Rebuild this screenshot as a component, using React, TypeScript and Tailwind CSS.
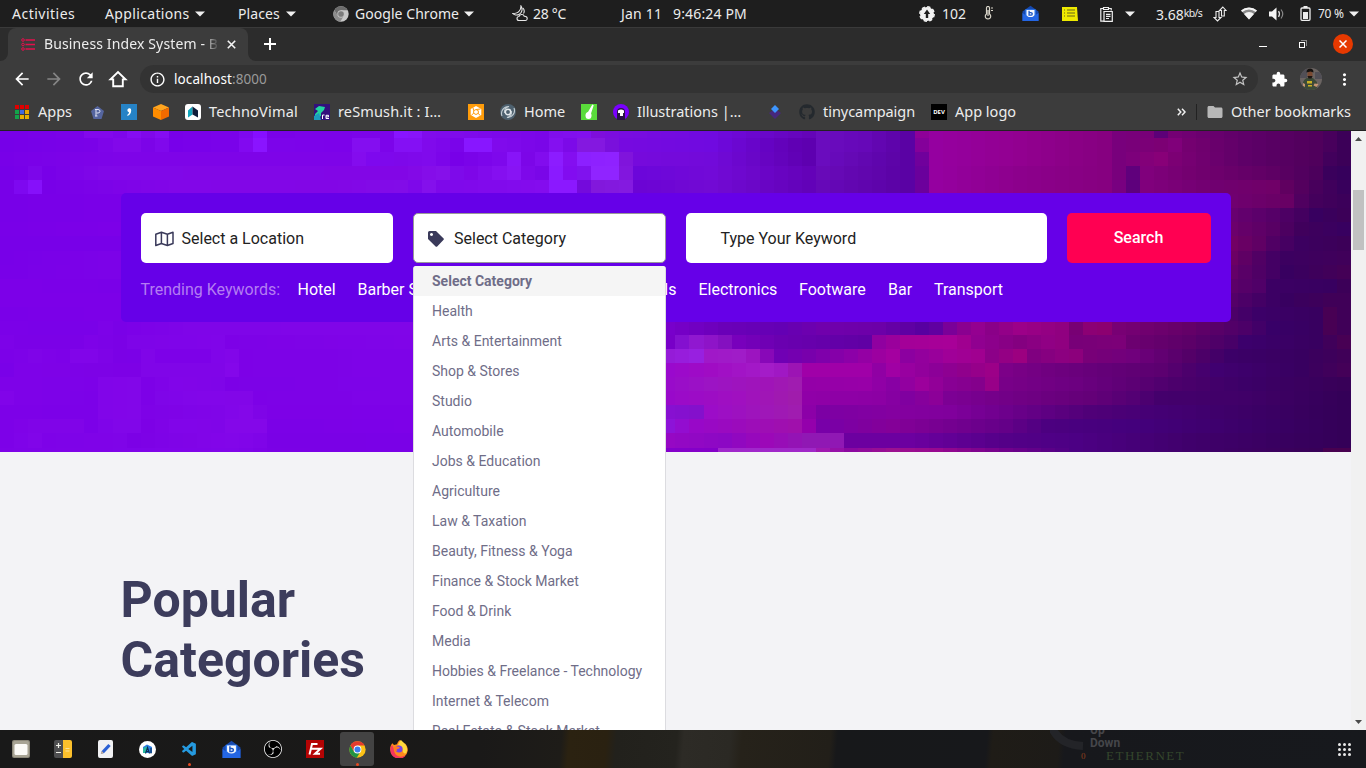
import React from "react";
import {
  MdArrowBack,
  MdArrowForward,
  MdRefresh,
  MdInfoOutline,
  MdStarBorder,
  MdExtension,
  MdMoreVert,
  MdFolder,
} from "react-icons/md";
import { FaGithub } from "react-icons/fa";
import { SiObsstudio } from "react-icons/si";
import { VscVscode } from "react-icons/vsc";

const MOSAIC = [
  "0:7800e8 5:7a02e8 6:8208ec 7:8208ec 8:7e06ea 9:850cf2 10:8008ea 11:850cf2 12:7800e8 16:7a02ea 17:7e08ee 18:860eff 19:7a02e8 27:7c04ea 28:8814ff 29:8814fa 30:800cec 38:7a06e8 39:800eec 41:8210ee 42:7e0edc 44:780ce0 50:700ae0 57:6404b8 58:6a0cbe 61:6608b8 64:5a02a4 65:8e0098 66:9500a0 72:920090 78:860080 79:78007c 81:780078 82:5c0078 83:740074 88:5e0068 93:50005c 94:48005c 95:3c0058",
  "0:7600e8 6:7a02e8 8:8208ea 9:8208ea 10:7c04e8 11:8008ec 12:7800ea 16:7a02ea 17:8209f0 18:8a14ff 19:7c04ea 24:7c02ea 25:840ef0 26:840ef0 27:7c04ea 28:8410f4 29:8410f4 30:800aec 32:7a04ea 33:8816ff 34:8816ff 35:800aec 38:7a06e8 39:8410f0 40:7c0ae8 41:8418e0 42:8418e0 43:7a10dc 44:760ae0 50:700ae0 56:6000b4 57:5e00b0 58:6a0cbe 61:6608b8 64:5a02a4 65:84009a 66:9500a0 72:920090 78:860080 79:78007c 82:7c0074 83:80007a 84:740070 88:5e0068 93:50005c 94:48005c 95:3c0058",
  "0:7800e8 8:7e04e8 24:7e04e8 25:840cee 26:7e08ee 28:7e08ea 30:800aec 32:7800e8 35:7e08ec 36:8814f8 37:7c06e8 38:820cee 39:8c1cff 40:840ef0 41:8c20ff 43:8f22ff 44:8014dc 45:760adc 50:720ada 57:5e00b0 58:6a0cbe 64:5a02a4 65:70009c 66:9500a0 72:920090 78:860080 79:78007c 82:880078 83:7c0074 88:5e0068 93:50005c 94:42005c 95:3c0058",
  "0:7600e8 1:7800e8 2:7c06ea 3:7800e8 7:8008e8 28:8206e6 31:8610ea 32:7e0aea 33:7e06e8 36:8814f4 37:7e08ea 38:7a06e8 39:8a1aff 40:820cf0 41:8012ee 42:9024ff 43:9024ff 44:8216de 45:6c06da 50:720ad8 57:6402b8 58:680ab8 64:5a02a4 65:6a009c 66:9500a0 72:8c008c 78:860080 79:78007c 80:60007c 81:80007c 84:740070 90:5e0064 93:4c005c 94:3a005c 95:36005c",
  "0:7800e8 1:7e08f0 2:8610fa 3:7800e8 12:8206e8 23:8206e6 28:820ce8 29:7e08ea 30:8410ec 31:7e08ea 38:840cee 39:8b18ff 40:8b18ff 41:740adc 42:8218dc 44:841ae0 45:6c04d4 50:720ad4 57:6202b8 58:6608b8 64:5a02a4 65:6c009c 66:9500a0 72:8c008c 78:860080 79:780080 80:5e007c 81:80007c 86:700070 90:700068 91:600060 93:48005c 94:40005c 95:38005c",
  "0:7800e8 8:7a00e8 87:700070 91:680064 92:500060 93:44005c 95:3c005a",
  "0:7800e8 8:7a00e8 87:680070 90:560068 92:440060 93:380060 95:3c0058",
  "0:7900e8 8:7c00e8 87:6c006c 90:580064 92:40005c 95:380060",
  "0:7800e8 8:7800e8 87:720064 89:600064 90:500064 92:3c0060 95:3c0058",
  "0:7800e8 8:7c02e8 87:6c0064 90:440064 91:3c0060 95:40005a",
  "0:7900e8 8:7c02e8 87:640068 90:440064 91:380060 95:440056",
  "0:7c00e8 8:7a00e8 87:5c0068 89:500068 90:3c0064 94:380060 95:3c0058",
  "0:7c00e8 8:7c00e8 87:540068 90:3c0064 91:380060 94:400058 95:400058",
  "0:7a00e8 8:7c00e8 87:4c0068 89:3c0068 93:380060 94:480054 95:400058",
  "0:7800e8 6:7600e8 7:7c02e8 8:7600e6 9:7a00e8 13:8006e8 30:8206e8 46:7c00d0 51:6a00b8 55:6400b4 58:7000ac 62:6c00a8 65:5800a0 66:6000a0 67:7a0098 68:8a0090 69:940090 70:8a0088 72:9c0088 75:900080 76:780074 77:8c0074 78:8c0070 79:780074 84:640068 88:4c0068 90:380068 93:380060 94:480054 95:400058",
  "0:7c02e8 1:7800e6 5:7800e6 6:7e02e8 8:7800e4 9:7e04e8 15:8206ea 16:7c00e6 30:8206e8 46:7800c8 47:7800c8 48:8410d0 49:9018d0 50:8e14c8 51:8410c0 52:7800bc 55:6a00b0 61:6000a4 62:9000a0 64:a40098 67:a80098 68:a00090 69:900090 72:840080 74:900084 75:900080 76:780078 79:7c0078 80:6c0070 84:5c0068 87:480068 88:3c006c 93:380060 95:480054",
  "0:7a00e8 2:8004e8 4:7c00e8 5:8406ea 6:8406ea 8:7800e4 9:7800e6 10:8206e8 11:7c00e8 14:7c00e8 15:8206ea 16:8608ea 17:7c00e6 30:7e04e8 46:9418d4 49:9820e0 50:a018c8 52:a01cc8 53:9c14c0 54:8808b8 55:7000b4 57:7800ac 60:8c00a8 62:9c00a0 63:a400a0 64:8c00a0 67:a00098 69:a00090 70:8c0088 72:9c0080 73:800080 75:8c0080 76:8c007c 77:780078 80:70007c 84:540068 87:3c0068 92:380060 95:400058",
  "0:7600e8 1:7e02e8 8:7c00e4 9:7c00e4 10:8206e8 15:8206e8 16:880aec 17:7c00e6 30:7e04e8 46:9808d0 50:a00cc4 54:a41cc8 55:a018c4 56:9c14b4 57:a000a8 61:a000a8 62:9000a4 63:a000a4 64:9800a0 66:8c0098 68:90008c 70:9c0088 71:7c0088 74:700080 78:640078 82:5c0070 84:4c006c 86:400070 92:380060 95:440058",
  "0:7e02e8 6:7c00e8 7:8406ea 9:8608ea 10:7c00e6 12:8406ea 13:8406e8 15:8006e8 16:7a00e6 30:7e04e8 46:9808cc 50:9c14c4 54:a014b8 56:a01cb0 57:9400a8 61:9800a8 63:8800a4 65:9c009c 67:880094 69:84008c 70:980088 71:780088 76:6c0080 80:5c0074 83:4c006c 88:3c0068 95:380058",
  "0:8404ea 1:7e02e8 6:7a00e8 7:8406ea 9:8608ea 10:7c00e6 11:8006e8 13:8408ea 17:8608e8 18:7c00e6 30:7e04e8 46:9808cc 52:a010c0 56:a01cac 57:9000a8 62:8c00a4 64:8000a0 66:8c0098 67:7c0094 72:700084 77:640078 80:540074 82:44006c 88:400068 95:340058",
  "0:7c00e8 6:7a00e8 7:8406ea 9:8608ea 10:7e02e6 15:8206e8 17:880aea 18:8004e6 19:7c00e6 30:7c00e8 46:8810d4 49:8410cc 50:9c0cc8 56:a01cb0 57:8c00a8 58:7c00a4 63:8400a0 67:80009c 72:680088 77:500078 82:440074 95:340058",
  "0:7c00e8 2:8204e8 5:8204e8 6:7a00e8 8:8408ea 9:8408ea 10:7c00e4 12:8406ea 15:8206e8 16:880aea 18:880aea 19:7800e6 30:7c00e8 46:8818e0 49:9808c8 56:a010ac 57:9400ac 58:7800a8 63:840098 71:640088 74:4c0080 80:44007c 95:340058",
  "0:7c00e8 2:8406ea 3:7e02e8 8:8004e8 9:7a00e4 12:8004e6 16:8608ea 18:8004e8 19:7600e4 30:7600e6 46:9808c4 51:8c08c4 54:9c08b8 57:9018b4 59:9018b4 60:6c00a0 64:6c00a0 71:540088 76:4c0084 84:40006c 95:340058",
  "0:7e02e8 16:8206ea 19:7800e4 30:7600e6 46:8400cc 50:8400c8 51:a028cc 57:a028c8 58:a018b0 60:8c08a0 63:9c1090 66:980890 71:70008c 76:4c0084 84:40006c 93:380058 94:480050 95:480050",
];

const CELL = 14.07;
const VIOLET = [126, 3, 232];

function channels(hex: string): number[] {
  return [0, 2, 4].map((i) => parseInt(hex.slice(i, i + 2), 16));
}

function expandRow(row: string, r: number): string[] {
  const stops = row.split(" ").map((s) => {
    const [col, hex] = s.split(":");
    return { col: Number(col), rgb: channels(hex) };
  });
  const out: string[] = [];
  for (let c = 0; c < 96; c++) {
    let i = 0;
    while (i < stops.length - 2 && stops[i + 1].col <= c) i++;
    const a = stops[i];
    const b = stops[i + 1];
    const t = Math.min(1, (c - a.col) / (b.col - a.col));
    const soften = r >= 14 && c < 30 ? 0.45 : 0;
    const rgb = a.rgb.map((v, k) => {
      const value = v + (b.rgb[k] - v) * t;
      return Math.round(value + (VIOLET[k] - value) * soften);
    });
    out.push(`rgb(${rgb.join(",")})`);
  }
  return out;
}

const Mosaic = () => (
  <svg className="absolute inset-0" width="1351" height="321" shapeRendering="crispEdges">
    {MOSAIC.map((row, r) =>
      expandRow(row, r).map((fill, c) => (
        <rect
          key={`${r}-${c}`}
          x={Math.round(c * CELL)}
          y={Math.round(7 + (r - 1) * CELL)}
          width={15}
          height={15}
          fill={fill}
        />
      ))
    )}
  </svg>
);

const Slot = ({ className, children }: { className: string; children?: React.ReactNode }) => (
  <div className={`flex shrink-0 items-center whitespace-nowrap ${className}`}>{children}</div>
);

const Caret = () => (
  <svg width="10" height="6" viewBox="0 0 10 6" className="shrink-0">
    <path d="M0 .5h10L5 5.500z" fill="#f0f0f0" />
  </svg>
);

const MailIcon = ({ size }: { size: number }) => (
  <svg width={size} height={size} viewBox="0 0 18 18">
    <path d="M.5 7 9 .8 17.500 7v10H.5z" fill="#1648ad" />
    <path d="M3.500 4.500h11V12h-11z" fill="#2e78ee" />
    <path d="m.5 8.500 5 3.500h7l5-3.500V17H.5z" fill="#2466e4" />
    <path d="M4.800 5.200h8.400v4.600q0 3-4.200 3t-4.200-3z" fill="#f6f9ff" />
    <path d="M7.500 6v4.800h1.800c2 0 2-2.800 0-2.800H7.500" fill="none" stroke="#1b55c4" strokeWidth="1.400" />
  </svg>
);

const ChromeIcon = ({ size, gray }: { size: number; gray?: boolean }) => (
  <svg width={size} height={size} viewBox="0 0 48 48">
    <circle cx="24" cy="24" r="23" fill={gray ? "#c8c8c8" : "#fbc116"} />
    <path d="M4 12.500A23 23 0 0 1 44 12.500H24L14 30z" fill={gray ? "#6c6c6c" : "#e33b2e"} />
    <path d="M4 12.500A23 23 0 0 0 22 47l10-17H14z" fill={gray ? "#8c8c8c" : "#229342"} />
    <circle cx="24" cy="24" r="11" fill={gray ? "#c4c4c4" : "#fff"} />
    <circle cx="24" cy="24" r="8.500" fill={gray ? "#7c7c7c" : "#3b7ded"} />
  </svg>
);

const TopBar = () => (
  <div className="flex h-[27px] shrink-0 items-center bg-[#1e1e1e] pl-3 text-[14px] text-[#ececec]">
    <Slot className="w-[93px] tracking-[0.5px]">Activities</Slot>
    <Slot className="w-[90px] tracking-[0.35px]">Applications</Slot>
    <Slot className="w-[43px]"><Caret /></Slot>
    <Slot className="w-[48px] tracking-[0.1px]">Places</Slot>
    <Slot className="w-[47px]"><Caret /></Slot>
    <Slot className="w-[22px]"><ChromeIcon size={16} gray /></Slot>
    <Slot className="w-[109px] tracking-[0.05px]">Google Chrome</Slot>
    <Slot className="w-[48px]"><Caret /></Slot>
    <Slot className="w-[21px]">
      <svg width="17" height="17" viewBox="0 0 17 17" fill="none" stroke="#e8e8e8" strokeWidth="1.100">
        <path d="M9 1c2 3 1 7-2 8.500C5 10.500 2 10 .8 8.500c3 0 5-.5 6.500-2.500C8.500 4.500 9 3 9 1zM11 3c1.500 2 1.500 4 .5 5.500" />
        <path d="M7 15.500a2 2 0 0 1 0-4c.5-2.300 4.500-2.800 5.300-.2 3.500-.6 3.900 4.200.9 4.200z" />
      </svg>
    </Slot>
    <Slot className="w-[88px] tracking-[-0.3px]">28 °C</Slot>
    <Slot className="w-[52px] pb-px tracking-[0.2px]">Jan 11</Slot>
    <Slot className="w-[246px] pb-px tracking-[0.15px]">9:46:24 PM</Slot>
    <Slot className="w-[23px]">
      <svg width="16" height="16" viewBox="0 0 16 16">
        <circle cx="8" cy="8" r="7" fill="#f2f2f2" />
        <circle cx="8" cy="8" r="7.200" fill="none" stroke="#f2f2f2" strokeWidth="1.500" strokeDasharray="3.350 2.300" />
        <path d="M8 3.500 11.200 8H9.200v4H6.800V8H4.800z" fill="#1e1e1e" />
      </svg>
    </Slot>
    <Slot className="w-[42px]">102</Slot>
    <Slot className="w-[38px] pb-px">
      <svg width="10" height="14" viewBox="0 0 10 14" fill="none" stroke="#d8d4c8" strokeWidth="1.200">
        <path d="M2.500 8V2a1.500 1.500 0 0 1 3 0v6a2.700 2.700 0 1 1-3 0zM4 4v6M7 2h2M7 4.500h2" />
      </svg>
    </Slot>
    <Slot className="w-[40px]"><MailIcon size={17} /></Slot>
    <Slot className="w-[38px]">
      <svg width="16" height="14" viewBox="0 0 16 14">
        <path d="M0 0h15l1 14H0z" fill="#eeea00" />
        <path d="M2 3h1M2 6h1M2 9h1M5 3h8M5 6h8M5 9h8" stroke="#67661a" strokeWidth="1.200" />
      </svg>
    </Slot>
    <Slot className="w-[25px]">
      <svg width="13" height="16" viewBox="0 0 13 16" fill="none" stroke="#eee" strokeWidth="1.200">
        <path d="M3 2.500H.8v12.700h3M9 2.500h2.200v2M3.500 1.500h5v2h-5zM4 5.500h8.300v9.800H4zM6 8.300h4.500M6 10.400h4.500M6 12.500h3" />
      </svg>
    </Slot>
    <Slot className="w-[31px]"><Caret /></Slot>
    <Slot className="w-[57px] items-baseline pt-px">
      <span>3.68</span>
      <span className="text-[10.500px] tracking-[-0.7px]">kb/s</span>
    </Slot>
    <Slot className="w-[28px]">
      <svg width="14" height="16" viewBox="0 0 14 16" fill="none" stroke="#eee" strokeWidth="1.100">
        <path d="M3 5.500h3v6h2L4.500 15 1 11.500h2zM8.500 10V4.500h-2L9.800 1 13 4.500h-1.700V10z" />
      </svg>
    </Slot>
    <Slot className="w-[28px]">
      <svg width="16" height="13" viewBox="0 0 16 13">
        <path d="M0 3.500a12 12 0 0 1 16 0L8 12.500z" fill="#8a8a8a" />
        <path d="M0 3.500a12 12 0 0 1 16 0l-1.300 1.500a10 10 0 0 0-13.400 0zM3 7a7.500 7.500 0 0 1 10 0l-5 5.500z" fill="#f4f4f4" />
      </svg>
    </Slot>
    <Slot className="w-[31px]">
      <svg width="16" height="14" viewBox="0 0 16 14">
        <path d="M0 4.500h3L7.500.5v13L3 9.500H0z" fill="#f4f4f4" />
        <path d="M9.500 4.200q2 2.800 0 5.600" stroke="#ddd" strokeWidth="1.300" fill="none" />
        <path d="M12 2.500q3.500 4.500 0 9" stroke="#888" strokeWidth="1.200" fill="none" />
      </svg>
    </Slot>
    <Slot className="w-[18px] pb-px">
      <svg width="11" height="15" viewBox="0 0 11 15">
        <path d="M3.500 0h4v2h-4z" fill="#eee" />
        <rect x="1" y="2" width="9" height="12.300" rx="1" fill="none" stroke="#eee" strokeWidth="1.300" />
        <path d="M3 6h5v7H3z" fill="#eee" />
      </svg>
    </Slot>
    <Slot className="w-[31px] text-[12px] tracking-[-0.3px]">70 %</Slot>
    <Slot className="w-[17px]"><Caret /></Slot>
  </div>
);

const TabStrip = () => (
  <div className="flex h-[34px] shrink-0 border-t border-[#3a3a3a] bg-[#2c2c2c]">
    <div className="flex w-2 items-end bg-[#3c3c3c]">
      <div className="h-[33px] w-2 rounded-br-lg bg-[#2c2c2c]" />
    </div>
    <div className="flex w-[240px] items-center rounded-t-lg bg-[#3c3c3c] pl-[13px]">
      <Slot className="w-[23px]">
        <svg width="14" height="13" viewBox="0 0 14 13" stroke="#e2104c" fill="none">
          <circle cx="2" cy="2" r="1.300" /><circle cx="2" cy="6.500" r="1.300" /><circle cx="2" cy="11" r="1.300" />
          <path d="M4.500 2H14M4.500 6.500H14M4.500 11H14" strokeWidth="1.300" />
        </svg>
      </Slot>
      <div className="mr-2 w-[175px] overflow-hidden whitespace-nowrap pb-[2px] text-[14px] tracking-[0.13px] text-[#ededed] [mask-image:linear-gradient(to_right,black_160px,transparent_175px)]">
        Business Index System - Bu
      </div>
      <svg width="9" height="9" viewBox="0 0 9 9" stroke="#f4f4f4" strokeWidth="1.600"><path d="m.8.8 7.400 7.400M8.200.8.8 8.200" /></svg>
    </div>
    <div className="flex w-2 items-end bg-[linear-gradient(to_top,#3c3c3c_8px,#2c2c2c_8px)]">
      <div className="h-2 w-2 rounded-bl-lg bg-[#2c2c2c]" />
    </div>
    <div className="flex flex-1 items-center pb-px pl-2">
      <svg width="12" height="12" viewBox="0 0 12 12" stroke="#fff" strokeWidth="2"><path d="M6 0v12M0 6h12" /></svg>
    </div>
    <div className="flex items-center pb-px pr-[13px]">
      <Slot className="h-full w-[40px]">
        <div className="mt-1 h-px w-2 bg-white" />
      </Slot>
      <Slot className="w-[34px]">
        <svg width="8" height="8" viewBox="0 0 8 8" fill="none" shapeRendering="crispEdges">
          <path d="M2.500 1V.5h5v5H7" stroke="#8a8a8a" />
          <path d="M.5 2.500h5v5h-5z" stroke="#fff" />
        </svg>
      </Slot>
      <div className="flex size-5 items-center justify-center rounded-full bg-[#e63900]">
        <svg width="8" height="8" viewBox="0 0 8 8" stroke="#fff" strokeWidth="1.500"><path d="m.5.5 7 7M7.500.5l-7 7" /></svg>
      </div>
    </div>
  </div>
);

const Toolbar = () => (
  <div className="flex h-9 shrink-0 items-center bg-[#3c3c3c] pl-3">
    <Slot className="w-8 text-[20px] text-white"><MdArrowBack /></Slot>
    <Slot className="w-8 text-[20px] text-[#858585]"><MdArrowForward /></Slot>
    <Slot className="w-8 text-[20px] text-white"><MdRefresh /></Slot>
    <Slot className="w-8">
      <svg width="20" height="20" viewBox="0 0 20 20" fill="none" stroke="#fff" strokeWidth="1.900">
        <path d="M2.500 10.400h2.700v6.800h9.600v-6.800h2.700L10 3z" />
      </svg>
    </Slot>
    <div className="flex h-7 w-[1118px] items-center rounded-full bg-[#333] pl-[9px] pr-[9px]">
      <Slot className="w-[25px] text-[17px] text-white"><MdInfoOutline /></Slot>
      <div className="flex-1 text-[13.500px] tracking-[0.1px] text-white">
        localhost<span className="text-[#9a9a9a]">:8000</span>
      </div>
      <MdStarBorder className="text-[18px] text-[#c4c4c4]" />
    </div>
    <Slot className="w-[42px] pl-[13px] text-[17px] text-white"><MdExtension /></Slot>
    <Slot className="w-[35px]">
      <svg width="22" height="22" viewBox="0 0 22 22" className="rounded-full">
        <path d="M0 0h22v22H0z" fill="#6b6462" />
        <path d="M0 0h7v10H0zM15 4h7v7h-7z" fill="#514f56" />
        <path d="M3 14q3-5 6-4h4l4 4v8H3z" fill="#3c4a38" />
        <ellipse cx="10" cy="6.500" rx="2.600" ry="3.800" fill="#7a4a32" />
        <path d="M6.500 4.500q0-4 3.500-4t3.500 4l-3-1-4 1z" fill="#14110f" />
        <path d="M7.500 8h5l-1 2.500h-3z" fill="#1c1614" />
        <path d="M7 13h5v2.500H7zM8 17h4v1.500H8z" fill="#c9b022" />
        <path d="M14.500 15.500l4 .5-2 3-3-1.500zM3 15l2 1v3l-2-1z" fill="#c69674" />
      </svg>
    </Slot>
    <MdMoreVert className="text-[19px] text-white" />
  </div>
);

const APP_COLORS = ["#e10000", "#e10000", "#e10000", "#12a34a", "#4069e0", "#e8a800", "#12a34a", "#e8b000", "#e8b000"];

const Bookmarks = () => (
  <div className="flex h-[33px] shrink-0 items-center bg-[#3c3c3c] pb-[3px] pl-[15px] text-[14.500px] text-[#ececec]">
    <Slot className="w-[23px]">
      <div className="grid grid-cols-3 gap-x-[1px] gap-y-[1px]">
        {APP_COLORS.map((c, i) => (
          <div key={i} className="size-[4px]" style={{ background: c }} />
        ))}
      </div>
    </Slot>
    <Slot className="w-[53px]">Apps</Slot>
    <Slot className="w-[30px]">
      <svg width="13" height="13" viewBox="0 0 13 13">
        <path d="m6.500 0 6.500 5-2.500 8h-8L0 5z" fill="#55659f" />
        <path d="M5 10V3.500h2q2 0 2 1.700T7 7H5.500M4 10h2.500M4 3.500h2" stroke="#dfe3f4" fill="none" />
      </svg>
    </Slot>
    <Slot className="w-8">
      <svg width="16" height="16" viewBox="0 0 16 16">
        <path d="M0 0h16v16H0z" fill="#2683c6" />
        <path d="M8 4.200a2 2 0 0 1 2.200 2.200c0 3-1.600 4.600-3.700 5.400l-.5-.8C7.400 10.300 8 9.500 8 8.300A2.100 2.100 0 0 1 8 4.200z" fill="#fff" />
      </svg>
    </Slot>
    <Slot className="w-8">
      <svg width="16" height="16" viewBox="0 0 16 16">
        <path d="m8 0 8 3.500L8 7 0 3.500z" fill="#ffa51f" />
        <path d="m0 3.500 8 3.500v9l-8-3.500z" fill="#ff8c00" />
        <path d="m16 3.500-8 3.500v9l8-3.500z" fill="#f16a00" />
      </svg>
    </Slot>
    <Slot className="w-6">
      <svg width="16" height="16" viewBox="0 0 16 16">
        <rect width="16" height="16" rx="3" fill="#fff" />
        <path d="M3 6.500 7.500 2.500v8L3 13.500z" fill="#12a7bd" />
        <path d="M7.500 2.500 13 6.500v7L7.500 10.500z" fill="#101d3a" />
      </svg>
    </Slot>
    <Slot className="w-[105px] tracking-[0.2px]">TechnoVimal</Slot>
    <Slot className="w-6">
      <svg width="16" height="16" viewBox="0 0 16 16">
        <path d="M0 0h16v16H0z" fill="#33107c" />
        <path d="M1 5 5 2l6 1-1 3-3 3v3l-6 4V10l3-3z" fill="#22d3a0" />
        <path d="M0 16V12l5-3 2 7z" fill="#1c9cc0" />
        <path d="M8.500 15v-4h2M15 14.500h-3v-3.200h2.500v1.600H12" stroke="#fff" fill="none" />
      </svg>
    </Slot>
    <Slot className="w-[130px] tracking-[0.15px]">reSmush.it : I…</Slot>
    <Slot className="w-8">
      <svg width="16" height="16" viewBox="0 0 16 16">
        <path d="M0 0h16v16H0z" fill="#ff9c0a" />
        <path d="m8 2 5.300 3v6L8 14l-5.300-3V5z" fill="#fff" />
        <path d="m8 5.500 2.300 1.200v2.600L8 10.500 5.700 9.300V6.700zM8 5.500l4.500-.5M10.300 9.300 12 11.500M5.700 9.300 3.500 11M5.700 6.700 5 3.700" fill="none" stroke="#ff9c0a" />
      </svg>
    </Slot>
    <Slot className="w-6">
      <svg width="16" height="16" viewBox="0 0 16 16">
        <circle cx="8" cy="8" r="8" fill="#4d606e" />
        <circle cx="8" cy="8" r="2.700" fill="none" stroke="#e4e9ec" strokeWidth="1.500" />
        <path d="M2 12A7 7 0 0 1 9 2.500Q4 4 4.500 9M14 4a7 7 0 0 1-7 9.500q5-1.500 4.500-6.500" fill="none" stroke="#c4ced4" strokeWidth="1.100" />
      </svg>
    </Slot>
    <Slot className="w-[57px]">Home</Slot>
    <Slot className="w-8">
      <svg width="16" height="16" viewBox="0 0 16 16">
        <path d="M0 0h16v16H0z" fill="#5adc3b" />
        <path d="M12 1 7.500 8.500l1.800.7z" stroke="#fff" strokeWidth="1.500" fill="#fff" />
        <ellipse cx="7.500" cy="11.500" rx="3" ry="3.500" fill="#fff" />
      </svg>
    </Slot>
    <Slot className="w-6">
      <svg width="16" height="16" viewBox="0 0 16 16">
        <circle cx="8" cy="8" r="8" fill="#7a00ff" />
        <path d="M4 16V8a4 4 0 0 1 8 0v8z" fill="#2a1446" />
        <path d="M5 6.500q3-2 6 0V9h-1v3H7V9H5z" fill="#fff" />
      </svg>
    </Slot>
    <Slot className="w-[132px]">Illustrations |…</Slot>
    <Slot className="w-[30px]">
      <svg width="12" height="14" viewBox="0 0 12 14">
        <path d="m0 8 6-4 6 4-6 6z" fill="#46287c" />
        <path d="m6 0 4 4-4 4-4-4z" fill="#3d96ff" />
      </svg>
    </Slot>
    <Slot className="w-6 text-[16px] text-[#24292e]"><FaGithub /></Slot>
    <Slot className="w-[108px] tracking-[-0.05px]">tinycampaign</Slot>
    <Slot className="w-6">
      <div className="flex size-4 items-center justify-center bg-black text-[6px] font-bold text-white">DEV</div>
    </Slot>
    <Slot className="w-[222px]">App logo</Slot>
    <Slot className="w-[19px]">
      <svg width="9" height="8" viewBox="0 0 9 8" fill="none" stroke="#f0f0f0" strokeWidth="1.500"><path d="m.8.8 3 3.200-3 3.200M5 .8l3 3.200-3 3.200" /></svg>
    </Slot>
    <Slot className="w-[10px]"><div className="h-4 w-px bg-[#222]" /></Slot>
    <Slot className="w-[25px] text-[18px] text-[#b8b8b8]"><MdFolder /></Slot>
    <Slot className="w-[125px]">Other bookmarks</Slot>
  </div>
);

const CATEGORIES = [
  "Health",
  "Arts & Entertainment",
  "Shop & Stores",
  "Studio",
  "Automobile",
  "Jobs & Education",
  "Agriculture",
  "Law & Taxation",
  "Beauty, Fitness & Yoga",
  "Finance & Stock Market",
  "Food & Drink",
  "Media",
  "Hobbies & Freelance - Technology",
  "Internet & Telecom",
  "Real Estate & Stock Market",
];

const Dropdown = () => (
  <div className="absolute -left-px top-[52px] z-10 h-[600px] w-[253px] rounded-t-[3px] border border-t-0 border-[#dcdce0] bg-white text-[14px] leading-[30px] text-[#6f6d88]">
    <div className="rounded-t-[3px] bg-[#f5f5f5] pl-[18px] font-bold">Select Category</div>
    {CATEGORIES.map((c) => (
      <div key={c} className="pl-[18px]">{c}</div>
    ))}
  </div>
);

const SearchPanel = () => (
  <div className="relative ml-[120.500px] mt-[62px] h-[129px] w-[1110px] rounded-[5px] bg-[#6600e8] px-5 pt-5 text-[16px]">
    <div className="flex gap-5">
      <div className="flex h-[50px] w-[252.500px] items-center rounded-[5px] bg-white pl-[14px] pt-px text-[#222]">
        <svg width="19" height="16" viewBox="0 0 19 16" fill="none" stroke="#3a3a5a" strokeWidth="1.500" strokeLinejoin="round" className="mr-2">
          <path d="M.8 3.200 6.400 1.200l6 2 5.600-2v11.300l-5.600 2-6-2-5.600 2zM6.400 1.200v11.300M12.400 3.200v11.300" />
        </svg>
        Select a Location
      </div>
      <div className="relative flex h-[50px] w-[252.500px] items-center rounded-[5px] border border-[#999] bg-white pl-[14px] pt-px text-[#222]">
        <svg width="16" height="16" viewBox="0 0 16 16" className="mr-[10px]">
          <path fillRule="evenodd" d="M0 1.500Q0 0 1.500 0H8l7.600 7.400q.7.700 0 1.400L9.200 15.500q-.8.700-1.600 0L0 8zM3.500 2a1.500 1.500 0 1 0 .01 0z" fill="#3a3a5a" />
        </svg>
        Select Category
        <Dropdown />
      </div>
      <div className="flex h-[50px] w-[361px] items-center rounded-[5px] bg-white pl-[35px] pt-[2px] text-[#222]">Type Your Keyword</div>
      <div className="flex h-[50px] w-[144px] items-center justify-center rounded-[5px] bg-[#ff0052] font-medium text-white">Search</div>
    </div>
    <div className="mt-[15px] flex h-6 items-center whitespace-nowrap text-white">
      <Slot className="w-[157px] text-[#b47df2]">Trending Keywords:</Slot>
      <Slot className="w-[60px]">Hotel</Slot>
      <Slot className="w-[341px] justify-between pr-[22px]">
        <span>Barber Shop</span>
        <span>Hospitals</span>
      </Slot>
      <Slot className="w-[100.500px]">Electronics</Slot>
      <Slot className="w-[89px]">Footware</Slot>
      <Slot className="w-[46px]">Bar</Slot>
      <Slot className="">Transport</Slot>
    </div>
  </div>
);

const Page = () => (
  <div className="flex h-[600px] shrink-0 overflow-hidden border-t border-[#222] font-['Roboto',sans-serif]">
    <div className="w-[1351px] bg-[#f3f3f6]">
      <div className="relative z-10 h-[321px]">
        <Mosaic />
        <div className="relative flex">
          <SearchPanel />
        </div>
      </div>
      <h1 className="ml-[120.500px] mt-[118px] w-[300px] text-[50px] font-bold leading-[60px] text-[#3c3c5c]">
        Popular Categories
      </h1>
    </div>
    <div className="flex w-[15px] flex-col items-center bg-[#f1f1f1]">
      <svg width="7" height="4" viewBox="0 0 7 4" className="mt-[6px]"><path d="M3.500 0 7 4H0z" fill="#4a4a4a" /></svg>
      <div className="mt-[49px] h-[60px] w-[11px] bg-[#c1c1c1]" />
      <div className="flex-1" />
      <svg width="7" height="4" viewBox="0 0 7 4" className="mb-[6px]"><path d="M3.500 4 7 0H0z" fill="#4a4a4a" /></svg>
    </div>
  </div>
);

const DockItem = ({ active, dot, children }: { active?: boolean; dot?: boolean; children: React.ReactNode }) => (
  <div className="flex w-[42px] shrink-0 items-center justify-center">
    <div className={`relative flex size-[34px] items-center justify-center rounded-[3px] ${active ? "bg-[#434343]" : ""}`}>
      {children}
      {dot && <div className="absolute bottom-0 size-[3px] rounded-full bg-[#e8491f]" />}
    </div>
  </div>
);

const Taskbar = () => (
  <div className="flex h-[38px] shrink-0 overflow-hidden bg-[linear-gradient(95deg,#191919_0px,#1a1918_480px,#1e1c18_560px,#2b2211_568px,#2a2111_605px,#22211c_615px,#24231e_675px,#2d2b26_682px,#2b2924_728px,#26221a_740px,#221f19_828px,#17181a_835px,#17181b_984px,#1f1c17_990px,#1d1b18_1056px,#17181c_1062px,#17191d_1366px)]">
    <DockItem>
      <svg width="18" height="18" viewBox="0 0 18 18">
        <rect width="18" height="18" rx="2" fill="#8b8778" />
        <rect x="1" y="1" width="16" height="16" rx="1.500" fill="#a8a494" />
        <rect x="2.500" y="4" width="13" height="11" rx="1.500" fill="#fbfaf6" />
      </svg>
    </DockItem>
    <DockItem>
      <svg width="18" height="18" viewBox="0 0 18 18">
        <path d="M0 2Q0 0 2 0h7v18H2q-2 0-2-2z" fill="#4e4e50" />
        <path d="M9 0h7q2 0 2 2v14q0 2-2 2H9z" fill="#fcc02c" />
        <path d="M2 5.500h5M4.500 3v5M2 12.500h5" stroke="#f0f0e8" strokeWidth="1.200" />
        <path d="M11.500 8.500h4M11.500 11h4" stroke="#fbe39a" strokeWidth="1.200" />
      </svg>
    </DockItem>
    <DockItem>
      <svg width="15" height="18" viewBox="0 0 16 18" preserveAspectRatio="none">
        <rect width="16" height="18" rx="2" fill="#f1f1f3" />
        <path d="m3 14 1-3L11 4l2.500 2-7 7z" fill="#2b60d4" />
        <path d="m3 14 1-3 2 2z" fill="#d8b48c" />
      </svg>
    </DockItem>
    <DockItem>
      <svg width="17" height="17" viewBox="0 0 17 17">
        <circle cx="8.500" cy="8.500" r="8.500" fill="#fff" />
        <path d="M4 12V6l4-2.500L13 6v6z" fill="#2b7de0" />
        <path d="M4 8q2-3 5-2l-2 6H4z" fill="#28b8a0" />
        <path d="m6.500 12.500 2-6 2 6M7 10.500h3M12 7v5.500" stroke="#0b2c52" fill="none" strokeWidth="1.100" />
      </svg>
    </DockItem>
    <DockItem dot><VscVscode className="text-[17px] text-[#259ae0]" /></DockItem>
    <DockItem><MailIcon size={19} /></DockItem>
    <DockItem>
      <div className="rounded-full bg-black"><SiObsstudio className="text-[18px] text-[#f4f4f4]" /></div>
    </DockItem>
    <DockItem>
      <svg width="18" height="18" viewBox="0 0 18 18">
        <path d="M0 0h18v18H0z" fill="#b40404" />
        <path d="M3.500 14.500 6 4h5.500M5 8.800h4.500M9.500 8.800h5l-5.500 5h5" stroke="#fff" strokeWidth="2" fill="none" />
      </svg>
    </DockItem>
    <DockItem active dot><ChromeIcon size={17} /></DockItem>
    <DockItem>
      <svg width="18" height="18" viewBox="0 0 18 18">
        <path d="M10 0c1 1.500 3 2.500 4 4 .8-.3.800-.8.800-.8C17 5.500 18 8 17.800 10.500A8.800 8.800 0 0 1 .3 10C0 7.500.8 5 2.300 3.300L4 5l3-.7C7.500 2.500 8.500 1 10 0z" fill="#ff8a1c" />
        <path d="M11 0c1 1.500 3 2.500 4 4 2.500 3 2.500 6 1.500 8.500-1 2-4 1-4-3.500 0-2.500-2.500-3-4.500-4C9 3 9.500 1 11 0z" fill="#ffd83b" />
        <path d="M.3 10a8.800 8.800 0 0 0 15.500 5.500c-4 2-9 1.500-11-2.500C3.500 10 4 7 2 5 .8 6.500.2 8 .3 10z" fill="#f5365c" />
        <circle cx="9" cy="9" r="3.600" fill="#7542e5" />
        <path d="M4 7q3-1 6 .5-1 1.500-3 1.500-1 1 .5 2.500Q4 11 4 7z" fill="#ff7a22" />
      </svg>
    </DockItem>
    <div className="w-[630px]" />
    <div className="relative w-[160px] overflow-hidden">
      <svg width="40" height="20" viewBox="0 0 40 20" className="absolute left-0 top-0"><path d="M2-2Q10 15 33 16" fill="none" stroke="#232428" strokeWidth="8" /></svg>
      <div className="absolute left-[40px] top-[-6px] font-['Roboto',sans-serif] text-[12px] font-bold leading-[12.500px] text-[#45464a]">Up<br />Down</div>
      <div className="absolute left-[31px] top-[21px] font-['Liberation_Serif',serif] text-[9px] leading-[10px] text-[#90401c]">0</div>
      <div className="absolute left-[56px] top-[18px] font-['Liberation_Serif',serif] text-[13px] leading-[16px] tracking-[1.500px] text-[#34462c]">ETHERNET</div>
    </div>
    <div className="flex flex-1 items-center justify-end pr-[15px]">
      <div className="grid grid-cols-3 gap-[2px]">
        {Array.from({ length: 9 }, (_, i) => (
          <div key={i} className="size-[3px] rounded-full bg-[#e8e8e8]" />
        ))}
      </div>
    </div>
  </div>
);

export default function App() {
  return (
    <div className="flex h-[768px] w-[1366px] flex-col overflow-hidden font-['Noto_Sans',sans-serif]">
      <TopBar />
      <TabStrip />
      <Toolbar />
      <Bookmarks />
      <Page />
      <Taskbar />
    </div>
  );
}
